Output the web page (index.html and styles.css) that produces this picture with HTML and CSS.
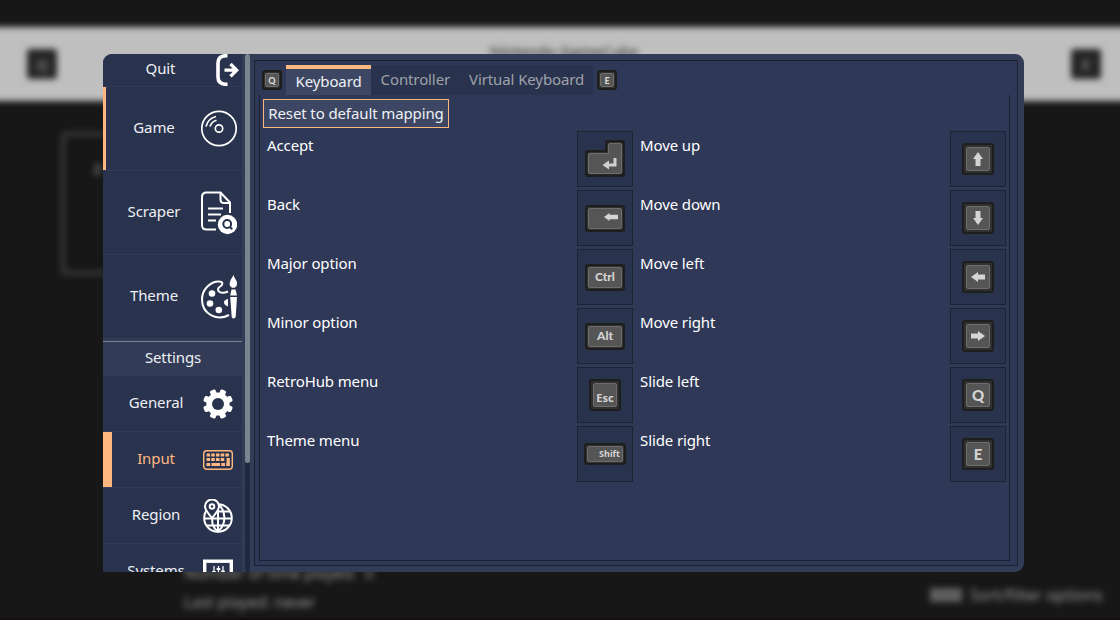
FILE: index.html
```html
<!DOCTYPE html>
<html lang="en">
<head>
<meta charset="utf-8">
<title>RetroHub settings</title>
<link rel="stylesheet" href="styles.css">
</head>
<body>
<div class="scene">
  <div class="backdrop">
    <div class="bar"></div>
    <div class="blob blob-left">Q</div>
    <div class="blob blob-right">E</div>
    <div class="console-name">Nintendo GameCube</div>
    <div class="game-card">2</div>
    <div class="meta meta-times">Number of time played: &nbsp;0</div>
    <div class="meta meta-last">Last played: never</div>
    <div class="meta meta-sort"><span class="meta-key"></span>Sort/filter options</div>
  </div>
  <div class="base-line"></div>

  <main class="modal">
    <nav class="sidebar">
      <div class="item quit"><span class="name">Quit</span>
        <svg class="quit-icon" viewBox="0 0 24 32" fill="none" stroke="#fff"><path d="M12.500 1.700H10.500Q3 2 3 9V23Q3 30 10.500 30.300H12.500" stroke-width="3.600"/><path d="M9.500 16.200H21.500M15.500 10l6.200 6.200-6.200 6.200" stroke-width="3.300"/></svg>
      </div>
      <div class="item big current"><span class="name">Game</span>
        <svg class="icon-big" viewBox="0 0 36 40" fill="none" stroke="#fff" stroke-width="1.700"><circle cx="18" cy="19.500" r="17.200"/><circle cx="18" cy="19.500" r="3.700"/><path d="M5 17.500A13.500 13.500 0 0 1 15 7.500M9 17.500A9.500 9.500 0 0 1 15.500 11.200"/></svg>
      </div>
      <div class="item big"><span class="name">Scraper</span>
        <svg class="icon-big tall" viewBox="0 0 36 44" fill="none" stroke="#fff" stroke-width="2"><path d="M15 38.500H5.500Q1 38.500 1 34V6Q1 1.500 5.500 1.500H19.500L29 11.500V22"/><path d="M19.500 1.500V8.500Q19.500 12 23 12H29M7 17.500H22M7 23.500H20M7 29.500H15"/><circle cx="26.500" cy="33.500" r="9.700" fill="#fff" stroke="none"/><circle cx="26.200" cy="33" r="3.900" stroke="#29334d" stroke-width="2"/><path d="M29 36l2.200 2.200" stroke="#29334d" stroke-width="2"/></svg>
      </div>
      <div class="item big"><span class="name">Theme</span>
        <svg class="icon-big tall" viewBox="0 0 36 44" fill="none" stroke="#fff" stroke-width="2"><path d="M28 40C17 46 1 40 1 24.500C1 14 10 6.500 17.500 6.500C23 6.500 22 10 18.500 12C14.500 15 19 20 27 16.500"/><g fill="#fff" stroke="none"><circle cx="11" cy="18.500" r="3.300"/><circle cx="9" cy="28.500" r="3.300"/><circle cx="17.800" cy="35" r="3.300"/><path d="M27 24C22 25 21 29 27 31.500Z"/><path d="M32.500 0C33.500 4 36 5 36 8.500C36 11 34.500 12.500 33.500 12.800H31Q28.500 11.500 28.500 9Q29 5 32.500 0Z"/><path d="M30.500 14.500H34.500L36 20.500H29.200ZM29.200 22H36L34.700 42Q32.500 45 30.700 42Z"/></g></svg>
      </div>
      <div class="heading">Settings</div>
      <div class="item small"><span class="name">General</span>
        <svg class="icon" viewBox="-15 -15 30 30" fill="#fff"><circle r="11.600"/><g transform="rotate(22.500)"><rect x="-3" y="-15" width="6" height="30" rx="1.600"/><rect x="-3" y="-15" width="6" height="30" rx="1.600" transform="rotate(45)"/><rect x="-3" y="-15" width="6" height="30" rx="1.600" transform="rotate(90)"/><rect x="-3" y="-15" width="6" height="30" rx="1.600" transform="rotate(135)"/></g><circle r="6" fill="#29334d"/></svg>
      </div>
      <div class="item small selected"><span class="name">Input</span>
        <svg class="icon" viewBox="0 0 30 30" fill="none" stroke="#ffb780"><rect x=".7" y="5.700" width="28.600" height="18.600" rx="3" stroke-width="1.400"/><path d="M3.600 10H26.500M3.600 14.500H22" stroke-width="3.200" stroke-dasharray="3.500 1.200"/><path d="M3.500 19.500H7.200M8.500 19.500H17M18.300 19.500H22M23.200 19.500H26.800M25.200 13V20" stroke-width="3.200"/></svg>
      </div>
      <div class="item small"><span class="name">Region</span>
        <svg class="icon globe" viewBox="0 0 30 34" fill="none" stroke="#fff" stroke-width="2"><circle cx="15" cy="19" r="13.800"/><path d="M1 19.500H29M4 26.500H26M12 12.500H27M15 5V33M10 18C8 23 10 29 15 32.500C24 25 23 11 15 5"/><path d="M9 19C4 13 2 11 2 7.500A7 7 0 0 1 16 7.500C16 11 13 14 9 19Z" fill="#29334d"/><circle cx="9" cy="7.500" r="2.300"/></svg>
      </div>
      <div class="item small last"><span class="name">Systems</span>
        <svg class="icon" viewBox="0 0 30 30" fill="none" stroke="#fff"><rect x="1.700" y="4.200" width="26.600" height="21" stroke-width="3.400"/><path d="M11 9V20M15.500 9V20M20 9V20" stroke-width="1.200"/><path d="M9.200 15H12.800M13.700 12H17.300M18.200 14.500H21.800" stroke-width="2"/></svg>
      </div>
    </nav>
    <div class="scroll"><div class="thumb"></div></div>

    <section class="panel">
      <header class="tabs">
        <span class="mini key"><span class="cap">Q</span></span>
        <div class="tab-strip"><span class="tab active">Keyboard</span><span class="tab">Controller</span><span class="tab">Virtual Keyboard</span></div>
        <span class="mini key"><span class="cap">E</span></span>
      </header>
      <div class="page">
        <button class="reset">Reset to default mapping</button>
        <div class="bindings">
          <div class="binding"><span>Accept</span><div class="slot"><svg class="enter" viewBox="0 0 40 37"><path d="M3 10H20V3Q20 0 23 0H37Q40 0 40 3V34Q40 37 37 37H3Q0 37 0 34V13Q0 10 3 10Z" fill="#1e1e1e"/><path d="M4 12H22V4Q22 2 24 2H36Q38 2 38 4V32Q38 34.500 36 34.500H4Q2 34.500 2 32V14Q2 12 4 12Z" fill="#303030"/><path d="M5 13.500H23.500V5Q23.500 3.500 25 3.500H35Q36.500 3.500 36.500 5V32Q36.500 33.500 35 33.500H5Q3.500 33.500 3.500 32V15Q3.500 13.500 5 13.500Z" fill="#555" stroke="#6e6e6e"/><path d="M30 18V25H22" fill="none" stroke="#d0d0d0" stroke-width="3"/><path d="M17.500 25L24 20.500V29.500Z" fill="#d0d0d0"/></svg></div></div>
          <div class="binding"><span>Move up</span><div class="slot"><span class="key square"><span class="cap"><svg class="arrow up" viewBox="0 0 14 10"><path d="M0 5L7 0V2.500H14V7.500H7V10Z"/></svg></span></span></div></div>
          <div class="binding"><span>Back</span><div class="slot"><span class="key wide"><span class="cap back"><svg class="arrow" viewBox="0 0 14 10"><path d="M0 5L5.500 1V2.800H14V7.200H5.500V9Z"/></svg></span></span></div></div>
          <div class="binding"><span>Move down</span><div class="slot"><span class="key square"><span class="cap"><svg class="arrow down" viewBox="0 0 14 10"><path d="M0 5L7 0V2.500H14V7.500H7V10Z"/></svg></span></span></div></div>
          <div class="binding"><span>Major option</span><div class="slot"><span class="key wide"><span class="cap">Ctrl</span></span></div></div>
          <div class="binding"><span>Move left</span><div class="slot"><span class="key square"><span class="cap"><svg class="arrow" viewBox="0 0 14 10"><path d="M0 5L7 0V2.500H14V7.500H7V10Z"/></svg></span></span></div></div>
          <div class="binding"><span>Minor option</span><div class="slot"><span class="key wide"><span class="cap">Alt</span></span></div></div>
          <div class="binding"><span>Move right</span><div class="slot"><span class="key square"><span class="cap"><svg class="arrow right" viewBox="0 0 14 10"><path d="M0 5L7 0V2.500H14V7.500H7V10Z"/></svg></span></span></div></div>
          <div class="binding"><span>RetroHub menu</span><div class="slot"><span class="key square"><span class="cap esc">Esc</span></span></div></div>
          <div class="binding"><span>Slide left</span><div class="slot"><span class="key square"><span class="cap letter">Q</span></span></div></div>
          <div class="binding"><span>Theme menu</span><div class="slot"><span class="key shift"><span class="cap">Shift</span></span></div></div>
          <div class="binding"><span>Slide right</span><div class="slot"><span class="key square"><span class="cap letter">E</span></span></div></div>
        </div>
      </div>
    </section>
  </main>
</div>
</body>
</html>
```
FILE: styles.css
```css
* { box-sizing: border-box; }
body { margin: 0; font-family: "Noto Sans", sans-serif; font-size: 15px; letter-spacing: -.11px; color: #eef0f4; }
.scene { position: relative; width: 1120px; height: 620px; overflow: hidden; background: #171717; display: grid; }

/* Blurred carousel screen behind the dialog */
.backdrop { position: absolute; inset: 0; }
.backdrop > * { position: absolute; filter: blur(3px); }
.bar { left: -20px; right: -20px; top: 27px; height: 74px; background: #bfbfbf; }
.blob { top: 49px; width: 30px; height: 30px; background: #242424; border-radius: 3px; color: #707070; font-weight: 700; text-align: center; line-height: 30px; }
.blob-left { left: 27px; }
.blob-right { left: 1071px; }
.console-name { left: 490px; top: 39px; font-size: 15px; letter-spacing: 0; line-height: 24px; color: #222; white-space: nowrap; }
.game-card { left: 61px; top: 132px; width: 150px; height: 143px; border: 4px solid #3c3c3c; border-radius: 5px; padding: 22px 28px; color: #777; font-weight: 700; }
.meta { color: #999; font-size: 15.500px; letter-spacing: 0; line-height: 22px; white-space: nowrap; }
.meta-times { left: 184px; top: 562px; }
.meta-last { left: 184px; top: 591px; }
.meta-sort { left: 930px; top: 584px; display: flex; align-items: center; gap: 8px; font-size: 16px; }
.meta-key { width: 32px; height: 14px; background: #606060; }
.base-line { position: absolute; left: 0; right: 0; bottom: 0; height: 2px; background: #150c12; }

.modal { position: relative; margin: 54px 0 0 103px; width: 921px; height: 518px; display: flex; background: #323c57; border-radius: 9px 9px 9px 0; overflow: hidden; }

.sidebar { width: 139px; height: 518px; overflow: hidden; margin-right: 3px; flex: none; }
.item { display: flex; align-items: center; background: #29334d; margin-bottom: 1px; }
.name { flex: 1; text-align: center; }
.quit { height: 32px; padding: 0 3px 0 2px; }
.quit .name { padding: 0 0 5px 1px; }
.quit-icon { width: 24px; height: 32px; }
.big { height: 83px; padding-left: 4px; padding-right: 5px; }
.big .name, .small .name { padding-bottom: 4px; }
.icon-big { width: 36px; height: 40px; }
.icon-big.tall { height: 44px; }
.current { border-left: 3px solid #ffb780; padding-left: 1px; }
.heading { height: 35px; margin: 3px -1px 0 0; border-top: 1px solid #7b8192; text-align: center; line-height: 31px; }
.small { height: 55px; padding: 0 9px 0 6px; }
.icon { width: 30px; height: 30px; }
.globe { height: 34px; }
.selected { border-left: 9px solid #ffb780; padding-left: 0; color: #ffb780; }
.selected .name { margin-left: -3px; }

.scroll { width: 5px; background: #202940; border-radius: 3px; flex: none; margin-right: 4px; }
.thumb { height: 409px; background: #7b8290; border-radius: 3px; }

.panel { width: 764px; height: 506px; margin-top: 6px; border: 1px solid #1b2030; background: #2f3857; padding: 4px 7px 4px 4px; display: flex; flex-direction: column; }
.tabs { display: flex; height: 30px; align-items: center; gap: 4px; padding-left: 3px; }
.tab-strip { display: flex; height: 30px; width: 307px; background: #29334d; }
.tab { line-height: 28px; padding: 0 9.500px; color: #9fa2aa; white-space: nowrap; }
.tab.active { border-top: 4px solid #ffb780; background: #3d4763; color: #eef0f4; line-height: 25px; }
.page { flex: 1; border: 1px solid #1b2030; border-top: 0; padding: 4px 3px; }
.reset { display: block; height: 29px; width: 186px; padding: 0; border: 1px solid #ffb780; background: #3d4763; color: #eef0f4; font: inherit; letter-spacing: inherit; line-height: 27px; white-space: nowrap; }
.bindings { display: grid; grid-template-columns: 370px 370px; gap: 3px; margin-top: 3px; }
.binding { display: flex; justify-content: space-between; height: 56px; padding-left: 4px; line-height: 28px; color: #fff; }
.slot { width: 56px; height: 56px; border: 1px solid #1d2330; background: #29334d; display: grid; place-items: center; }

.key { display: flex; border: 2px solid #1e1e1e; border-radius: 3px; background: #303030; padding: 1px; }
.cap { flex: 1; display: flex; align-items: center; justify-content: center; border: 1px solid #6e6e6e; border-radius: 2px; background: #555; color: #d4d4d4; font: 900 12px/1 Lato, sans-serif; letter-spacing: 0; }
.wide { width: 40px; height: 27px; }
.square { width: 32px; height: 32px; padding: 2px; }
.shift { width: 42px; height: 22px; }
.shift .cap { font: 700 9px/1 "Noto Sans", sans-serif; justify-content: flex-end; padding: 0 2px 2px 0; }
.cap.esc { font: 700 11px/1 "Noto Sans", sans-serif; align-items: flex-end; padding-bottom: 3px; }
.cap.letter { font: 900 15px/1 Lato, sans-serif; }
.mini { width: 20px; height: 20px; }
.mini .cap { font-size: 9px; }
.enter { width: 40px; height: 37px; transform: translateY(-1px); }
.arrow { width: 14px; height: 10px; fill: #d4d4d4; }
.arrow.up { transform: rotate(90deg); }
.arrow.down { transform: rotate(-90deg); }
.arrow.right { transform: rotate(180deg); }
.cap.back { justify-content: flex-end; align-items: flex-start; padding: 3px 3px 0 0; }
```
